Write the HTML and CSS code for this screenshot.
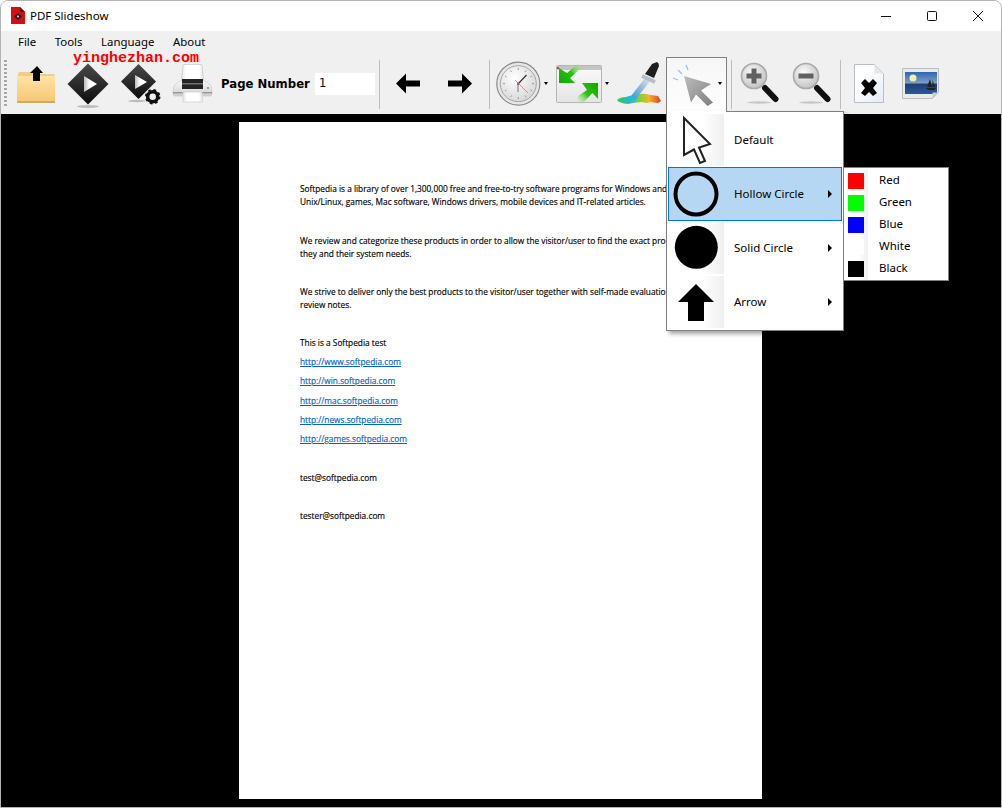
FILE: index.html
```html
<!DOCTYPE html>
<html lang="en">
<head>
<meta charset="utf-8">
<title>PDF Slideshow</title>
<link rel="stylesheet" href="styles.css">
</head>
<body>
<div class="window">
  <header class="titlebar">
    <svg class="app-icon" width="14" height="17" viewBox="0 0 14 17"><path d="M0 0h9l5 5v12H0z" fill="#d40f14"/><path d="M9 0l5 5H9z" fill="#7d0a0c"/><path d="M7 6l4 3.500L7 13 3 9.500z" fill="#222"/><circle cx="7" cy="9.500" r="1" fill="#ddd"/></svg>
    <span class="app-title">PDF Slideshow</span>
    <div class="win-controls">
      <div class="win-btn"><svg width="12" height="12" viewBox="0 0 12 12"><path d="M1 6.500h10" stroke="#111" fill="none"/></svg></div>
      <div class="win-btn"><svg width="12" height="12" viewBox="0 0 12 12"><rect x="1.500" y="1.500" width="9" height="9" rx="1" stroke="#111" fill="none"/></svg></div>
      <div class="win-btn"><svg width="12" height="12" viewBox="0 0 12 12"><path d="M1 1l10 10M11 1L1 11" stroke="#111" fill="none"/></svg></div>
    </div>
  </header>

  <nav class="menubar">
    <span class="menu-label">File</span>
    <span class="menu-label">Tools</span>
    <span class="menu-label">Language</span>
    <span class="menu-label">About</span>
  </nav>

  <div class="toolbar">
    <div class="grip"></div>
    <div class="tool">
      <svg class="icon" viewBox="0 0 48 48"><defs><linearGradient id="fold" x1="0" y1="0" x2="0" y2="1"><stop offset="0" stop-color="#fde3a6"/><stop offset="1" stop-color="#f8c873"/></linearGradient></defs>
        <path d="M6 16q0-3 2-3h11l2 2h20q2 0 2 2v25H5z" fill="#f2cd88"/><rect x="5" y="17" width="38" height="25" fill="url(#fold)"/><rect x="5" y="42" width="38" height="2" fill="#d3a868"/>
        <path d="M25 7l6 7h-3v8h-7v-8h-3z" fill="#000"/></svg>
    </div>
    <div class="tool">
      <svg class="icon" viewBox="0 0 48 48"><defs><linearGradient id="dia" x1="0" y1="0" x2="0" y2="1"><stop offset="0" stop-color="#4a4a4a"/><stop offset="1" stop-color="#0c0c0c"/></linearGradient><linearGradient id="tri" x1="0" y1="0" x2="1" y2="0"><stop offset="0" stop-color="#b9b9b9"/><stop offset=".4" stop-color="#fff"/></linearGradient></defs>
        <ellipse cx="24" cy="47.500" rx="11" ry="1.500" fill="#bbb"/><path d="M24 4.500L44.500 25 24 45.500 3.500 25z" fill="url(#dia)"/><path d="M20 17l13 8-13 8z" fill="url(#tri)"/></svg>
    </div>
    <div class="tool">
      <svg class="icon" viewBox="0 0 48 48">
        <ellipse cx="21" cy="42" rx="9" ry="1.200" fill="#bbb"/><path d="M22.500 5L40 22.500 22.500 40 5 22.500z" fill="url(#dia)"/><path d="M19 16l12 7-12 7z" fill="url(#tri)"/>
        <circle cx="36.700" cy="37.700" r="5" fill="none" stroke="#111" stroke-width="3.500"/><circle cx="36.700" cy="37.700" r="6.500" fill="none" stroke="#111" stroke-width="2.500" stroke-dasharray="2.500 2.600"/></svg>
    </div>
    <div class="tool">
      <svg class="icon" viewBox="0 0 48 48"><defs><linearGradient id="prn" x1="0" y1="0" x2="0" y2="1"><stop offset="0" stop-color="#fcfcfc"/><stop offset="1" stop-color="#cfcfcf"/></linearGradient><linearGradient id="paper" x1="0" y1="0" x2="1" y2="0"><stop offset="0" stop-color="#e4e4e4"/><stop offset=".2" stop-color="#fff"/><stop offset=".8" stop-color="#fff"/><stop offset="1" stop-color="#e4e4e4"/></linearGradient></defs>
        <path d="M15 6.500q0-1 1-1h17q1 0 1 1l1.500 15h-22z" fill="url(#paper)" stroke="#cdcdcd" stroke-width=".8"/>
        <path d="M5 32q0-6 4-8l5-3h21l5 3q4 2 4 8v3q0 2-2 2H7q-2 0-2-2z" fill="url(#prn)" stroke="#c6c6c6" stroke-width=".6"/>
        <rect x="14" y="20" width="21" height="10" fill="#242424"/><rect x="14" y="24" width="21" height="1.500" fill="#6e6e6e"/>
        <rect x="5" y="33" width="39" height="1.500" fill="#9a9a9a"/><circle cx="40" cy="29" r="1" fill="#888"/>
        <path d="M15 33h19l.5 10H15z" fill="url(#paper)" stroke="#d2d2d2" stroke-width=".8"/></svg>
    </div>
    <span class="page-label">Page Number</span>
    <div class="page-input">1</div>
    <div class="sep sep-a"></div>
    <div class="tool">
      <svg class="icon" viewBox="0 0 48 48"><path d="M12 24.500l10-10v7h14v6H22v7z" fill="#000"/></svg>
    </div>
    <div class="tool">
      <svg class="icon" viewBox="0 0 48 48"><path d="M36 24.500l-10-10v7H12v6h14v7z" fill="#000"/></svg>
    </div>
    <div class="sep sep-b"></div>
    <div class="tool tool-drop">
      <svg class="icon" viewBox="0 0 48 48"><defs><radialGradient id="face" cx=".4" cy=".35" r=".75"><stop offset="0" stop-color="#fff"/><stop offset="1" stop-color="#d2d2d2"/></radialGradient></defs>
        <circle cx="24.300" cy="24.700" r="21.500" fill="#e6e6e6" stroke="#8c8c8c" stroke-width="1.200"/><circle cx="24.300" cy="24.700" r="18" fill="url(#face)" stroke="#a5a5a5"/>
        <path d="M24.300 9v2M24.300 38v2M9 24.700h2M38 24.700h2M16.500 11.500l1 1.500M32 11.500l-1 1.500M11 17l1.500 1M38 17l-1.500 1M11 32l1.500-1M38 32l-1.500-1M16.500 38l1-1.500M32 38l-1-1.500" stroke="#999"/>
        <path d="M24 25l8.500-9" stroke="#333" stroke-width="1.200"/><path d="M24 25v8" stroke="#888" stroke-width="1.200"/><path d="M21 21l13 13" stroke="#d98a8a"/><circle cx="24" cy="25" r="1" fill="#c33"/></svg>
      <span class="caret caret-clock"></span>
    </div>
    <div class="tool tool-drop">
      <svg class="icon" viewBox="0 0 48 48"><defs><linearGradient id="g1" x1="1" y1="0" x2="0" y2="1"><stop offset="0" stop-color="#d8f0c4" stop-opacity=".2"/><stop offset=".45" stop-color="#29c20e"/><stop offset="1" stop-color="#12a805"/></linearGradient><linearGradient id="g2" x1="0" y1="1" x2="1" y2="0"><stop offset="0" stop-color="#d8f0c4" stop-opacity=".2"/><stop offset=".45" stop-color="#29c20e"/><stop offset="1" stop-color="#12a805"/></linearGradient><linearGradient id="win" x1="0" y1="0" x2="0" y2="1"><stop offset="0" stop-color="#fbfbfb"/><stop offset="1" stop-color="#e4e4e4"/></linearGradient></defs>
        <rect x="2.500" y="6.500" width="45" height="37" rx="1" fill="url(#win)" stroke="#b5b5b5"/><rect x="3" y="7" width="44" height="4" fill="#c4c4c4"/><rect x="3" y="8" width="2" height="2" fill="#e33"/>
        <path d="M5 9v15h16l-5-5 10-9V3L13 14z" fill="url(#g1)"/><path d="M44 24v16l-5.500-6L28 45h-4v-8l9-6-5-7z" fill="url(#g2)"/></svg>
      <span class="caret caret-win"></span>
    </div>
    <div class="tool tool-dropper">
      <svg class="icon" viewBox="0 0 48 48"><defs><linearGradient id="rain" x1="0" y1="0" x2="1" y2="0"><stop offset="0" stop-color="#3fc83a"/><stop offset=".3" stop-color="#27b6d8"/><stop offset=".5" stop-color="#7bd13d"/><stop offset=".72" stop-color="#f4b423"/><stop offset="1" stop-color="#e23c2b"/></linearGradient><linearGradient id="tube" x1="1" y1="0" x2="0" y2="1"><stop offset="0" stop-color="#d5dde3"/><stop offset=".5" stop-color="#8fbcd8"/><stop offset="1" stop-color="#3ea6dc"/></linearGradient></defs>
        <path d="M2 41q3-3 9-3 4-2 9-1 5-3 11-2l5 1 7 1 3 5-3 2-8-1-3 1-6-1-8 1-5 1q-9-1-11-4z" fill="url(#rain)"/><path d="M14 40q0-4 5-4l3 1q0 4-3 4z" fill="#28b4e4"/>
        <path d="M33 20L19 38" stroke="url(#tube)" stroke-width="6" fill="none"/>
        <path d="M27 17l13 6" stroke="#b2bfc9" stroke-width="4"/>
        <path d="M42 3q2 1 2 4l-5 12-9-4 7-10z" fill="#1e1e1e"/></svg>
    </div>
    <div class="tool-active">
      <svg class="icon" viewBox="0 0 48 48"><defs><linearGradient id="cur" x1="0" y1="0" x2="1" y2="1"><stop offset="0" stop-color="#bdbdbd"/><stop offset="1" stop-color="#7e7e7e"/></linearGradient></defs>
        <path d="M16 16l27 8-10 6.500 12 12-5.500 3.500-11.500-11.500-5 8z" fill="url(#cur)"/><path d="M5 18l5 2M10 10l4 4M18 5l2 5" stroke="#8fc6ea" stroke-width="1.300" fill="none"/></svg>
      <span class="caret"></span>
    </div>
    <div class="sep sep-c"></div>
    <div class="tool">
      <svg class="icon" viewBox="0 0 48 48"><defs><radialGradient id="lens" cx=".4" cy=".35" r=".8"><stop offset="0" stop-color="#fafafa"/><stop offset="1" stop-color="#b8b8b8"/></radialGradient></defs>
        <ellipse cx="24" cy="43.500" rx="12" ry="1.200" fill="#c6c6c6"/><path d="M30 29l10.500 11" stroke="#111" stroke-width="6" stroke-linecap="round"/><circle cx="19" cy="17" r="12.500" fill="url(#lens)" stroke="#a9a9a9" stroke-width="1.600"/><path d="M19 9.500v15M11.500 17h15" stroke="#606060" stroke-width="5"/></svg>
    </div>
    <div class="tool">
      <svg class="icon" viewBox="0 0 48 48"><ellipse cx="24" cy="43.500" rx="12" ry="1.200" fill="#c6c6c6"/><path d="M30 29l10.500 11" stroke="#111" stroke-width="6" stroke-linecap="round"/><circle cx="19" cy="17" r="12.500" fill="url(#lens)" stroke="#a9a9a9" stroke-width="1.600"/><path d="M11.500 17h15" stroke="#606060" stroke-width="5"/></svg>
    </div>
    <div class="sep sep-d"></div>
    <div class="tool">
      <svg class="icon" viewBox="0 0 48 48"><defs><linearGradient id="doc" x1="0" y1="0" x2="1" y2="1"><stop offset=".3" stop-color="#fff"/><stop offset="1" stop-color="#e2edf6"/></linearGradient></defs>
        <path d="M9.500 5.500h20l9 9v29h-29z" fill="url(#doc)" stroke="#b9bec4"/><path d="M29.500 5.500l9 9h-9z" fill="#e6e6e6"/>
        <path d="M24 24l4-4 4 4-4 5 4 5-4 3-4-4-4 4-4-3 4-5-4-5 4-4z" fill="#000"/></svg>
    </div>
    <div class="tool">
      <svg class="icon" viewBox="0 0 48 48"><defs><linearGradient id="sea" x1="0" y1="0" x2="0" y2="1"><stop offset="0" stop-color="#2b66b4"/><stop offset=".5" stop-color="#7f9fc2"/><stop offset=".55" stop-color="#1d3f73"/><stop offset="1" stop-color="#2c5a97"/></linearGradient></defs>
        <g transform="translate(-1 0)"><path d="M6.500 9.500h36v24l-6 6h-30z" fill="#eaeaea" stroke="#bdbdbd"/><rect x="9" y="13" width="32" height="22" fill="url(#sea)"/><circle cx="17" cy="19" r="3.500" fill="#f6f1a0"/>
        <path d="M31 28l3-8 2 8zM36.500 28v-7l2.500 7zM30 29h10l-2 2h-6z" fill="#222"/><path d="M42.500 33.500l-6 6v-6z" fill="#ccc"/></g></svg>
    </div>
  </div>

  <main class="stage">
    <article class="page">
      <p class="para">Softpedia is a library of over 1,300,000 free and free-to-try software programs for Windows and<br>Unix/Linux, games, Mac software, Windows drivers, mobile devices and IT-related articles.</p>
      <p class="para">We review and categorize these products in order to allow the visitor/user to find the exact product<br>they and their system needs.</p>
      <p class="para para-tight">We strive to deliver only the best products to the visitor/user together with self-made evaluation and<br>review notes.</p>
      <p class="para para-lead">This is a Softpedia test</p>
      <a class="link">http://www.softpedia.com</a>
      <a class="link">http://win.softpedia.com</a>
      <a class="link">http://mac.softpedia.com</a>
      <a class="link">http://news.softpedia.com</a>
      <a class="link link-last">http://games.softpedia.com</a>
      <p class="para para-tight">test@softpedia.com</p>
      <p class="para">tester@softpedia.com</p>
    </article>
  </main>

  <div class="watermark">yinghezhan.com</div>

  <div class="popup main-menu">
    <div class="item">
      <div class="item-icon"><svg width="56" height="54" viewBox="0 0 56 54"><path d="M16 5v37l10-5.500 6 13.500 5-2-6-13.500 11-3.500z" fill="#fff" stroke="#222" stroke-width="2"/></svg></div>
      <span class="item-text">Default</span>
    </div>
    <div class="item item-hot">
      <div class="item-icon"><svg width="56" height="54" viewBox="0 0 56 54"><circle cx="28" cy="27" r="20.500" fill="none" stroke="#000" stroke-width="4"/></svg></div>
      <span class="item-text">Hollow Circle</span><span class="sub-arrow"></span>
    </div>
    <div class="item">
      <div class="item-icon"><svg width="56" height="54" viewBox="0 0 56 54"><circle cx="28.300" cy="26.300" r="21.500" fill="#000"/></svg></div>
      <span class="item-text">Solid Circle</span><span class="sub-arrow"></span>
    </div>
    <div class="item">
      <div class="item-icon"><svg width="56" height="54" viewBox="0 0 56 54"><path d="M28 9l18 18H36v19H20V27H10z" fill="#000"/></svg></div>
      <span class="item-text">Arrow</span><span class="sub-arrow"></span>
    </div>
  </div>

  <div class="popup sub-menu">
    <div class="sub-item"><div class="sub-icon"><span class="swatch swatch-red"></span></div><span class="sub-text">Red</span></div>
    <div class="sub-item"><div class="sub-icon"><span class="swatch swatch-green"></span></div><span class="sub-text">Green</span></div>
    <div class="sub-item"><div class="sub-icon"><span class="swatch swatch-blue"></span></div><span class="sub-text">Blue</span></div>
    <div class="sub-item"><div class="sub-icon"><span class="swatch swatch-white"></span></div><span class="sub-text">White</span></div>
    <div class="sub-item"><div class="sub-icon"><span class="swatch swatch-black"></span></div><span class="sub-text">Black</span></div>
  </div>
</div>
</body>
</html>
```
FILE: styles.css
```css
* { box-sizing: border-box; }
html, body { margin: 0; padding: 0; background: #fff; }
body { width: 1002px; height: 808px; overflow: hidden; font-family: "Noto Sans", "Open Sans", sans-serif; font-size: 11.500px; color: #000; }

.window { position: relative; display: flex; flex-direction: column; width: 1002px; height: 808px; border: 1px solid #b4b4b4; border-radius: 8px 8px 0 0; overflow: hidden; background: #fff; }

.titlebar { display: flex; align-items: center; height: 30px; flex: none; padding-left: 10px; background: #fff; }
.app-icon { flex: none; margin-top: -1px; }
.app-title { margin: -1px 0 0 5px; }
.win-controls { display: flex; margin-left: auto; height: 100%; }
.win-btn { display: flex; align-items: center; justify-content: center; width: 46px; height: 100%; }

.menubar { display: flex; align-items: center; flex: none; height: 22px; padding-left: 7.700px; background: #f0f0f0; }
.menu-label { padding: 0 9.300px 1px; font-size: 11.400px; }

.toolbar { display: flex; align-items: center; flex: none; height: 61px; padding: 0 0 1px 3px; background: #f0f0f0; }
.grip { width: 3px; height: 47px; margin-right: 3px; background: repeating-linear-gradient(to bottom, #a8a8a8 0 2px, transparent 2px 4px); }
.tool { display: flex; align-items: center; justify-content: center; flex: none; width: 52px; height: 48px; }
.tool-drop { justify-content: flex-start; width: 60px; padding-left: 2px; }
.tool-dropper { margin-left: 1px; }
.icon { flex: none; display: block; width: 48px; height: 48px; overflow: visible; }
.caret { flex: none; width: 0; height: 0; margin-left: 2px; border-style: solid; border-width: 3px 2.500px 0; border-color: #000 transparent transparent; }
.caret-win { margin-left: 3px; }

.page-label { flex: none; width: 94px; margin: 2px 0 0 3px; font-family: "DejaVu Sans", sans-serif; font-size: 11.700px; font-weight: 700; white-space: nowrap; }
.page-input { flex: none; width: 60px; height: 22px; margin: 2px 0 0 0; padding-left: 4px; line-height: 21px; background: #fff; font-family: "DejaVu Sans", sans-serif; font-size: 11.500px; }

.sep { flex: none; width: 1px; height: 49px; margin-top: 2px; background: #bdbdbd; }
.sep-a { margin-left: 4px; margin-right: 2px; }
.sep-b { margin-left: 3px; margin-right: 2px; }
.sep-c { margin-left: 4px; margin-right: 1px; }
.sep-d { margin-left: 3px; margin-right: 2px; }

.tool-active { display: flex; align-items: center; flex: none; width: 61px; height: 58px; margin: 5px 0 0 1px; padding: 0 0 5px 1px; border: 1px solid #808080; border-bottom: 0; background: linear-gradient(#f6f6f6, #fff); }
.tool-active .caret { margin-left: 2px; }

.stage { flex: 1; padding: 8px 0 0 238px; background: #000; min-height: 0; }
.page { width: 523px; height: 677px; padding: 60px 0 0 61px; background: #fff; font-family: "Open Sans", sans-serif; font-size: 8.300px; line-height: 13px; color: #000; -webkit-text-stroke: .15px #000; white-space: nowrap; }
.para { margin: 0 0 25.500px; }
.para-tight { margin-bottom: 25px; }
.para-lead { margin-bottom: 6px; }
.link { display: table; margin-bottom: 6.250px; color: #0563c1; -webkit-text-stroke: .15px #0563c1; text-decoration: underline; }
.link-last { margin-bottom: 26px; }

.watermark { position: absolute; left: 72px; top: 50px; font-family: "Liberation Mono", monospace; font-size: 15px; font-weight: 700; line-height: 16px; color: #f00; }

.popup { position: absolute; background: #fff; border: 1px solid #808080; box-shadow: 3px 3px 4px rgba(0, 0, 0, .35); }
.main-menu { left: 665px; top: 110px; width: 178px; height: 220px; padding: 1px 0 0 0; }
.main-menu::before { content: ""; position: absolute; left: 0; top: -1px; width: 59px; height: 1px; background: #fff; }
.item { display: flex; align-items: center; height: 54px; border: 1px solid transparent; margin: 0 1px 0 1px; }
.item-icon { flex: none; width: 55px; height: 100%; background: linear-gradient(to right, #fff 60%, #f0f0f0); }
.item-icon svg { display: block; margin: -1px 0 0 -1px; }
.item-text { margin: 0 0 2px 10px; }
.item-hot { background: #b5d7f3; border-color: #0078d7; }
.item-hot .item-icon { background: none; }
.sub-arrow { width: 0; height: 0; margin-left: auto; margin-right: 9px; border-style: solid; border-width: 4px 0 4px 4px; border-color: transparent transparent transparent #000; }

.sub-menu { left: 843px; top: 166px; width: 105px; height: 114px; padding: 2px 0 0 0; border-left: 0; }
.sub-item { display: flex; align-items: center; height: 22px; }
.sub-icon { display: flex; align-items: center; width: 24px; height: 100%; padding-left: 4px; margin-right: 11px; background: linear-gradient(to right, #fff 60%, #f0f0f0); }
.sub-text { margin-bottom: 3px; }
.swatch { display: block; width: 16px; height: 16px; }
.swatch-red { background: #f00; }
.swatch-green { background: #0f0; }
.swatch-blue { background: #00f; }
.swatch-white { background: #fff; }
.swatch-black { background: #000; }
```
